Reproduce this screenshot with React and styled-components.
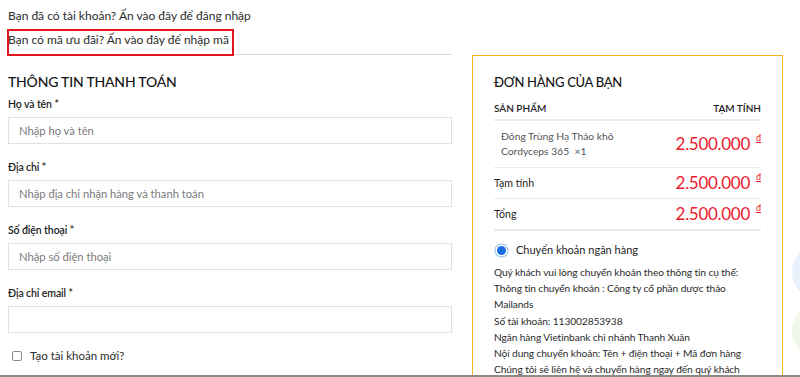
import React from 'react'
import styled, { createGlobalStyle } from 'styled-components'

const GlobalStyle = createGlobalStyle`
  html, body {
    margin: 0;
    padding: 0;
    background: #fff;
    overflow: hidden;
  }
  body {
    font-family: Lato, "Liberation Sans", sans-serif;
    color: #333;
  }
  * { box-sizing: border-box; }
`

const Page = styled.div`
  display: flex;
  gap: 20px;
  width: 800px;
  height: 377px;
  padding-left: 8px;
  overflow: hidden;
`

const LeftCol = styled.div`
  width: 444px;
  flex-shrink: 0;
`

const Notices = styled.div`
  padding-top: 6px;
  border-bottom: 1px solid #dcdcdc;
`

const Notice = styled.div`
  position: relative;
  font-size: 12px;
  line-height: 20px;
  color: #2b2b2b;
  padding-bottom: ${ props => props.last ? '4px' : '0' };
  margin-top: ${ props => props.last ? '4px' : '0' };
`

// red highlight drawn over the coupon notice
const Highlight = styled.span`
  position: absolute;
  left: -1px;
  top: -1px;
  width: 227px;
  height: 27px;
  border: 2px solid #e3161f;
  pointer-events: none;
`

const Heading = styled.h2`
  margin: 17px 0 3px;
  font-size: 14px;
  line-height: 20px;
  font-weight: 500;
  color: #141414;
  letter-spacing: -0.2px;
`

const Field = styled.div`
  margin-bottom: 14px;
`

const Label = styled.label`
  display: block;
  font-size: 10.5px;
  line-height: 18px;
  margin-bottom: 4px;
  color: #222;
  font-weight: 600;
  letter-spacing: -0.1px;
`

const Input = styled.input`
  display: block;
  width: 100%;
  height: 27px;
  border: 1px solid #e1e1e1;
  padding: 0 10px;
  font-family: inherit;
  font-size: 11.2px;
  color: #333;
  outline: none;

  &::placeholder {
    color: #7a7a7a;
  }
`

const CheckRow = styled.label`
  display: flex;
  align-items: center;
  gap: 8px;
  padding-left: 4px;
  font-size: 11.5px;
  line-height: 18px;
  color: #2b2b2b;
`

const Box = styled.span`
  width: 10px;
  height: 10px;
  border: 1px solid #8a8a8a;
  border-radius: 2px;
  background: #fff;
`

const Card = styled.div`
  width: 311px;
  flex-shrink: 0;
  margin-top: 55px;
  border: 1px solid #f5b41f;
  padding: 16px 21px 0;
  height: 340px;
`

const CardTitle = styled.h3`
  margin: 0 0 5px;
  font-size: 13px;
  line-height: 20px;
  font-weight: 500;
  color: #141414;
  letter-spacing: -0.3px;
`

// row height includes its bottom border
const Row = styled.div`
  display: flex;
  justify-content: space-between;
  align-items: center;
  height: ${ props => props.h }px;
  border-bottom: ${ props => props.thick ? 2 : 1 }px solid #ebebeb;
  padding-left: ${ props => props.indent ? '7px' : '0' };
`

const HeadCell = styled.span`
  font-size: 10px;
  font-weight: 600;
  color: #1e1e1e;
`

const ProductName = styled.span`
  font-size: 10.3px;
  line-height: 15px;
  color: #555;
`

const RowLabel = styled.span`
  font-size: 10.6px;
  color: #1e1e1e;
`

const Price = styled.span`
  display: flex;
  align-items: flex-start;
  gap: 6px;
  font-size: 17px;
  line-height: 22px;
  color: #ec1a2d;
  letter-spacing: -0.3px;

  sup {
    font-size: 9px;
    line-height: 10px;
    text-decoration: underline;
    letter-spacing: 0;
  }
`

const Payment = styled.div`
  display: flex;
  align-items: center;
  gap: 10px;
  margin: 11px 0 6px;
  padding-left: 3px;
  font-size: 11px;
  line-height: 16px;
  color: #1e1e1e;
`

const Radio = styled.span`
  width: 9px;
  height: 9px;
  border-radius: 50%;
  background: #1a6fe0;
  box-shadow: 0 0 0 1.5px #fff, 0 0 0 2.5px #9bbcef;
`

const Info = styled.p`
  margin: 0;
  font-size: 10.2px;
  line-height: 16.2px;
  letter-spacing: -0.1px;
  color: #2b2b2b;
  white-space: nowrap;
`

const Bubble = styled.span`
  position: fixed;
  right: -48px;
  top: ${ props => props.top }px;
  width: 56px;
  height: 56px;
  border-radius: 50%;
  background: ${ props => props.color };
`

const BottomRule = styled.div`
  position: fixed;
  left: 0;
  right: 0;
  bottom: 0;
  height: 2px;
  background: #8c8c8c;
`

function Price2({ value }) {
  return (
    <Price>
      { value }
      <sup>đ</sup>
    </Price>
  )
}

const fields = [
  { label: 'Họ và tên', placeholder: 'Nhập họ và tên' },
  { label: 'Địa chỉ', placeholder: 'Nhập địa chỉ nhận hàng và thanh toán' },
  { label: 'Số điện thoại', placeholder: 'Nhập số điện thoại' },
  { label: 'Địa chỉ email', placeholder: '' },
]

const info = [
  'Quý khách vui lòng chuyển khoản theo thông tin cụ thể:',
  'Thông tin chuyển khoản : Công ty cổ phần dược thảo',
  'Mailands',
  'Số tài khoản: 113002853938',
  'Ngân hàng Vietinbank chi nhánh Thanh Xuân',
  'Nội dung chuyển khoản: Tên + điện thoại + Mã đơn hàng',
  'Chúng tôi sẽ liên hệ và chuyển hàng ngay đến quý khách',
]

export default function App() {
  return (
    <>
      <GlobalStyle />
      <Page>
        <LeftCol>
          <Notices>
            <Notice>Bạn đã có tài khoản? Ấn vào đây để đăng nhập</Notice>
            <Notice last>
              Bạn có mã ưu đãi? Ấn vào đây để nhập mã
              <Highlight />
            </Notice>
          </Notices>
          <Heading>THÔNG TIN THANH TOÁN</Heading>
          { fields.map(f => (
            <Field key={ f.label }>
              <Label>{ f.label } *</Label>
              <Input placeholder={ f.placeholder } />
            </Field>
          )) }
          <CheckRow>
            <Box />
            Tạo tài khoản mới?
          </CheckRow>
        </LeftCol>
        <Card>
          <CardTitle>ĐƠN HÀNG CỦA BẠN</CardTitle>
          <Row h={ 24 } thick>
            <HeadCell>SẢN PHẨM</HeadCell>
            <HeadCell>TẠM TÍNH</HeadCell>
          </Row>
          <Row h={ 47 } indent>
            <ProductName>Đông Trùng Hạ Thảo khô<br />Cordyceps 365 &nbsp;×1</ProductName>
            <Price2 value="2.500.000" />
          </Row>
          <Row h={ 31 }>
            <RowLabel>Tạm tính</RowLabel>
            <Price2 value="2.500.000" />
          </Row>
          <Row h={ 32 } thick>
            <RowLabel>Tổng</RowLabel>
            <Price2 value="2.500.000" />
          </Row>
          <Payment>
            <Radio />
            Chuyển khoản ngân hàng
          </Payment>
          { info.map(line => <Info key={ line }>{ line }</Info>) }
        </Card>
      </Page>
      <Bubble top={ 244 } color="#e9f2fc" />
      <Bubble top={ 303 } color="#f0f7ea" />
      <BottomRule />
    </>
  )
}
